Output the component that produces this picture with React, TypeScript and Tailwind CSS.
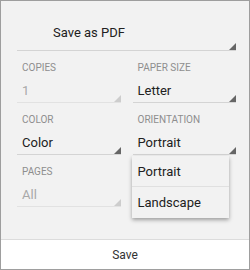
import React from "react";

const font = { fontFamily: "Roboto, 'Noto Sans', sans-serif" };

function Corner({ disabled = false }: { disabled?: boolean }) {
  return (
    <svg
      className="absolute right-0 bottom-0"
      width="7"
      height="7"
      viewBox="0 0 7 7"
    >
      <polygon points="7,0 7,7 0,7" fill={disabled ? "#cdcdcd" : "#666666"} />
    </svg>
  );
}

function Field({
  label,
  value,
  disabled = false,
  children,
}: {
  label: string;
  value: string;
  disabled?: boolean;
  children?: React.ReactNode;
}) {
  return (
    <div className="relative flex flex-col">
      <div className="h-[12px] pl-[5px] text-[10px] leading-[12px] text-[#8e8e8e]">
        {label}
      </div>
      <div
        className={`relative mt-[9px] border-b pb-[3px] pl-[5px] text-[13px] leading-[16px] ${
          disabled
            ? "border-[#e2e2e2] text-[#a8a8a8]"
            : "border-[#d4d4d4] text-[#212121]"
        }`}
      >
        {value}
        <Corner disabled={disabled} />
      </div>
      {children}
    </div>
  );
}

export default function App() {
  return (
    <div
      className="flex h-[270px] w-[250px] flex-col border border-[#9e9e9e] bg-white"
      style={font}
    >
      <div className="relative flex flex-1 flex-col bg-[#f2f2f2] pr-[13px] pl-[16px]">
        <div className="relative mt-[24px] border-b border-[#d4d4d4] pb-[9px] pl-[36px] text-[13px] leading-[16px] text-[#212121]">
          Save as PDF
          <Corner />
        </div>
        <div className="mt-[11px] grid grid-cols-2 gap-x-[12px] gap-y-[11px]">
          <Field label="COPIES" value="1" disabled />
          <Field label="PAPER SIZE" value="Letter" />
          <Field label="COLOR" value="Color" />
          <Field label="ORIENTATION" value="Portrait">
            <div className="absolute top-[42px] -left-[1px] z-10 w-[97px] bg-[#f2f2f2] shadow-[0_2px_4px_rgba(0,0,0,0.35)]">
              <div className="h-[31px] border-b border-[#e0e0e0] pl-[6px] text-[13px] leading-[31px] text-[#212121]">
                Portrait
              </div>
              <div className="h-[31px] pl-[6px] text-[13px] leading-[31px] text-[#212121]">
                Landscape
              </div>
            </div>
          </Field>
          <Field label="PAGES" value="All" disabled />
        </div>
      </div>
      <div className="flex h-[30px] items-center justify-center border-t border-[#dcdcdc] bg-white text-[12px] text-[#333333]">
        Save
      </div>
    </div>
  );
}
